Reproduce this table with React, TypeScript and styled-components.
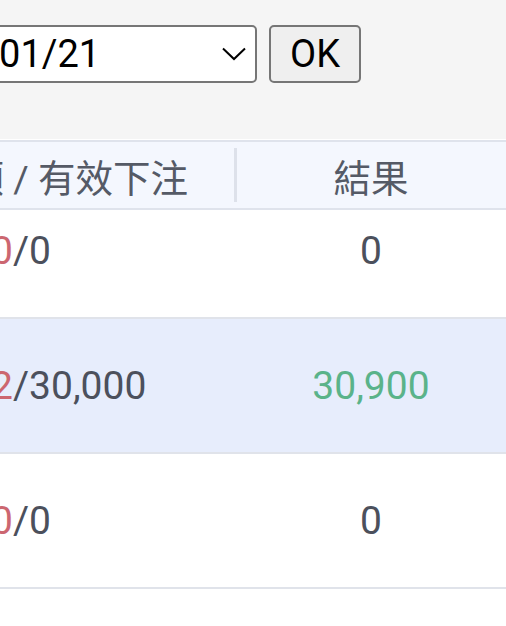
import React from 'react';
import styled, { createGlobalStyle } from 'styled-components';

const GlobalStyle = createGlobalStyle`
  html, body {
    margin: 0;
    padding: 0;
    background: #fff;
    overflow: hidden;
  }
  body {
    font-family: Roboto, "Noto Sans CJK TC", sans-serif;
  }
`;

// the view is the right part of a wider report page
const StyledPage = styled.div`
  width: 700px;
  margin-left: -193px;
`;

const StyledToolbar = styled.div`
  display: flex;
  align-items: center;
  gap: 12px;
  background: #f5f5f5;
  padding: 25px 0 56px 84px;
  margin-bottom: 1px;
`;

const StyledSelectWrap = styled.div`
  position: relative;
  width: 366px;
  height: 58px;
`;

const StyledSelect = styled.select`
  appearance: none;
  width: 100%;
  height: 100%;
  box-sizing: border-box;
  border: 2px solid #767676;
  border-radius: 5px;
  background: #fff;
  color: #000;
  font-family: Roboto, sans-serif;
  font-size: 38px;
  padding: 0 40px 0 5px;
  outline: none;
`;

const StyledChevron = styled.svg`
  position: absolute;
  right: 11px;
  top: 22px;
  pointer-events: none;
`;

const StyledBtn = styled.button`
  width: 92px;
  height: 58px;
  box-sizing: border-box;
  border: 2px solid #767676;
  border-radius: 5px;
  background: #efefef;
  color: #000;
  font-family: Roboto, sans-serif;
  font-size: 38px;
  padding: 0;
`;

const StyledHead = styled.div`
  position: relative;
  z-index: 1;
  display: grid;
  grid-template-columns: 428px 272px;
  height: 66px;
  background: #f4f7fe;
  border-top: 2px solid #dfe3ec;
  border-bottom: 2px solid #dfe3ec;
`;

const StyledHeadCell = styled.div<{ $sep?: boolean }>`
  position: relative;
  display: flex;
  align-items: center;
  justify-content: center;
  font-size: 37.5px;
  color: #555a66;
  white-space: nowrap;

  &::before {
    content: '';
    display: ${(p) => (p.$sep ? 'block' : 'none')};
    position: absolute;
    left: -1px;
    top: 6px;
    bottom: 6px;
    width: 3px;
    background: #dde1ea;
  }
`;

const StyledBody = styled.div`
  margin-top: -26px;
`;

const StyledRow = styled.div<{ $active?: boolean }>`
  display: grid;
  grid-template-columns: 428px 272px;
  height: 133px;
  background: ${(p) => (p.$active ? '#e7edfc' : '#fff')};
  border-bottom: 2px solid #e0e3ea;
`;

const StyledCell = styled.div`
  display: flex;
  align-items: center;
  justify-content: center;
  font-size: 39px;
  color: #4c505c;
  white-space: nowrap;
`;

const StyledLoss = styled.span`
  color: #cc6670;
`;

const StyledResult = styled.span<{ $win?: boolean }>`
  color: ${(p) => (p.$win ? '#5ab38a' : '#4c505c')};
`;

interface RowData {
  payout: string;
  bet: string;
  result: string;
  win?: boolean;
  active?: boolean;
}

const rows: RowData[] = [
  { payout: '0', bet: '0', result: '0' },
  { payout: '30,902', bet: '30,000', result: '30,900', win: true, active: true },
  { payout: '0', bet: '0', result: '0' },
];

export default function App() {
  return (
    <>
      <GlobalStyle />
      <StyledPage>
        <StyledToolbar>
          <StyledSelectWrap>
            <StyledSelect defaultValue="2025/01/21">
              <option>2025/01/21</option>
              <option>2025/01/20</option>
            </StyledSelect>
            <StyledChevron width="24" height="14" viewBox="0 0 24 14">
              <path d="M1 1.5 L12 12 L23 1.5" fill="none" stroke="#000" strokeWidth="2" />
            </StyledChevron>
          </StyledSelectWrap>
          <StyledBtn>OK</StyledBtn>
        </StyledToolbar>

        <StyledHead>
          <StyledHeadCell>輸贏金額 / 有效下注</StyledHeadCell>
          <StyledHeadCell $sep>結果</StyledHeadCell>
        </StyledHead>

        <StyledBody>
          {rows.map((r, i) => (
            <StyledRow key={i} $active={r.active}>
              <StyledCell>
                <StyledLoss>{r.payout}</StyledLoss>/{r.bet}
              </StyledCell>
              <StyledCell>
                <StyledResult $win={r.win}>{r.result}</StyledResult>
              </StyledCell>
            </StyledRow>
          ))}
        </StyledBody>
      </StyledPage>
    </>
  );
}
